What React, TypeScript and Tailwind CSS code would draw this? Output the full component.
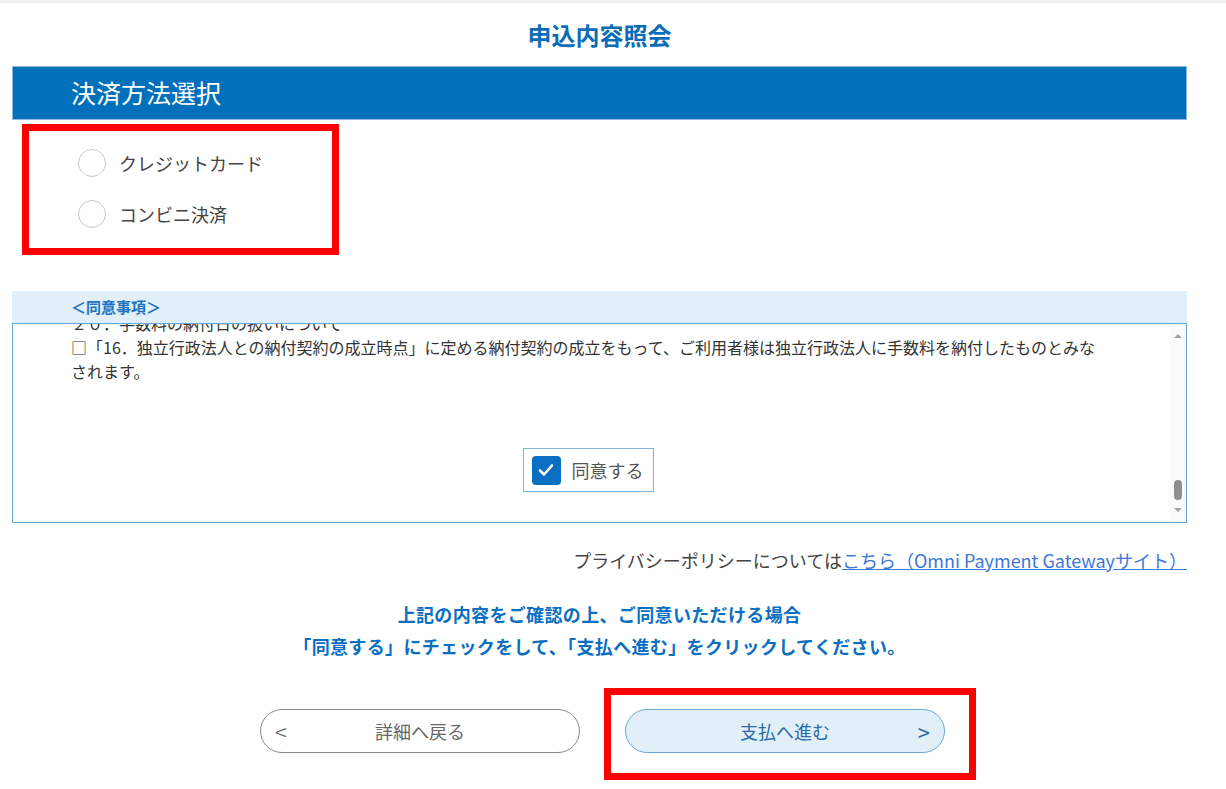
import React from 'react';

const font = { fontFamily: '"Noto Sans CJK JP", "Noto Sans", sans-serif' };

function Radio({ label }: { label: string }) {
  return (
    <label className="flex items-center gap-[13px] h-[28px]">
      <span className="w-[28px] h-[28px] rounded-full border border-[#c8c8c8] bg-white" />
      <span className="text-[18px] text-[#444]">{label}</span>
    </label>
  );
}

function Scrollbar() {
  return (
    <div className="w-[17px] bg-[#fbfbfb] flex flex-col items-center justify-between py-[10px]">
      <span className="w-0 h-0 border-l-[4px] border-r-[4px] border-b-[4px] border-l-transparent border-r-transparent border-b-[#a3a3a3]" />
      <div className="flex flex-col items-center gap-[8px]">
        <span className="w-[8px] h-[20px] rounded-full bg-[#8f8f8f]" />
        <span className="w-0 h-0 border-l-[4px] border-r-[4px] border-t-[4px] border-l-transparent border-r-transparent border-t-[#a3a3a3]" />
      </div>
    </div>
  );
}

export default function App() {
  return (
    <div className="relative w-[1226px] h-[789px] bg-white overflow-hidden" style={font}>
      <div className="h-[3px] bg-[#f2f2f2]" />
      <div className="px-[12px] w-[1199px]">
        <h1 className="h-[63px] flex items-center justify-center text-[24px] font-bold text-[#0a6db8]">
          申込内容照会
        </h1>

        <div className="h-[54px] bg-[#0070bb] border border-[#8fb8dc] flex items-center pl-[58px]">
          <span className="text-[25px] text-white">決済方法選択</span>
        </div>

        <div className="h-[171px] pl-[66px] pt-[29px] flex flex-col gap-[23px]">
          <Radio label="クレジットカード" />
          <Radio label="コンビニ決済" />
        </div>

        <div className="h-[32px] bg-[#e1eff9] flex items-center pl-[59px]">
          <span className="text-[15px] font-bold text-[#1b74c0]">＜同意事項＞</span>
        </div>

        <div className="h-[200px] border border-[#6aa5d8] flex">
          <div className="flex-1 overflow-hidden">
            <div className="-mt-[13px] pl-[58px] text-[16px] leading-[24px] text-[#333] whitespace-nowrap">
              <p>２０．手数料の納付日の扱いについて</p>
              <p>□「16．独立行政法人との納付契約の成立時点」に定める納付契約の成立をもって、ご利用者様は独立行政法人に手数料を納付したものとみな</p>
              <p>されます。</p>
            </div>
            <div className="flex justify-center mt-[65px] pr-[6px]">
              <label className="flex items-center gap-[11px] h-[44px] w-[131px] pl-[8px] border border-[#7fb3e0]">
                <span className="w-[29px] h-[29px] rounded-[4px] bg-[#0a6fc2] flex items-center justify-center">
                  <svg width="20" height="20" viewBox="0 0 20 20" fill="none">
                    <path d="M4 10.5l4 4 8-9" stroke="white" strokeWidth="2.6" strokeLinecap="round" strokeLinejoin="round" />
                  </svg>
                </span>
                <span className="text-[18px] text-[#555]">同意する</span>
              </label>
            </div>
          </div>
          <Scrollbar />
        </div>

        <p className="mt-[25px] text-right text-[18px] text-[#444] leading-[24px]">
          プライバシーポリシーについては
          <a className="text-[#3c78d8] underline">こちら（Omni Payment Gatewayサイト）</a>
        </p>

        <div className="mt-[26px] text-center text-[18px] font-bold text-[#0a6fc2] leading-[32px] tracking-[0.35px]">
          <p>上記の内容をご確認の上、ご同意いただける場合</p>
          <p>「同意する」にチェックをして、「支払へ進む」をクリックしてください。</p>
        </div>

        <div className="mt-[47px] flex justify-center gap-[45px] pl-[6px]">
          <button className="relative w-[320px] h-[44px] rounded-full border border-[#8a8a8a] bg-white text-[18px] text-[#666]">
            <span className="absolute left-[14px] top-1/2 -translate-y-1/2 text-[22px] font-light text-[#555]">&lt;</span>
            詳細へ戻る
          </button>
          <button className="relative w-[320px] h-[44px] rounded-full border border-[#6fa7d8] bg-[#e1eff9] text-[18px] text-[#2a6aa8]">
            支払へ進む
            <span className="absolute right-[14px] top-1/2 -translate-y-1/2 text-[22px] text-[#2a6aa8]">&gt;</span>
          </button>
        </div>
      </div>

      <div className="absolute left-[22px] top-[124px] w-[317px] h-[131px] border-[7px] border-[#ff0000]" />
      <div className="absolute left-[604px] top-[688px] w-[372px] h-[92px] border-[7px] border-[#ff0000]" />
    </div>
  );
}
